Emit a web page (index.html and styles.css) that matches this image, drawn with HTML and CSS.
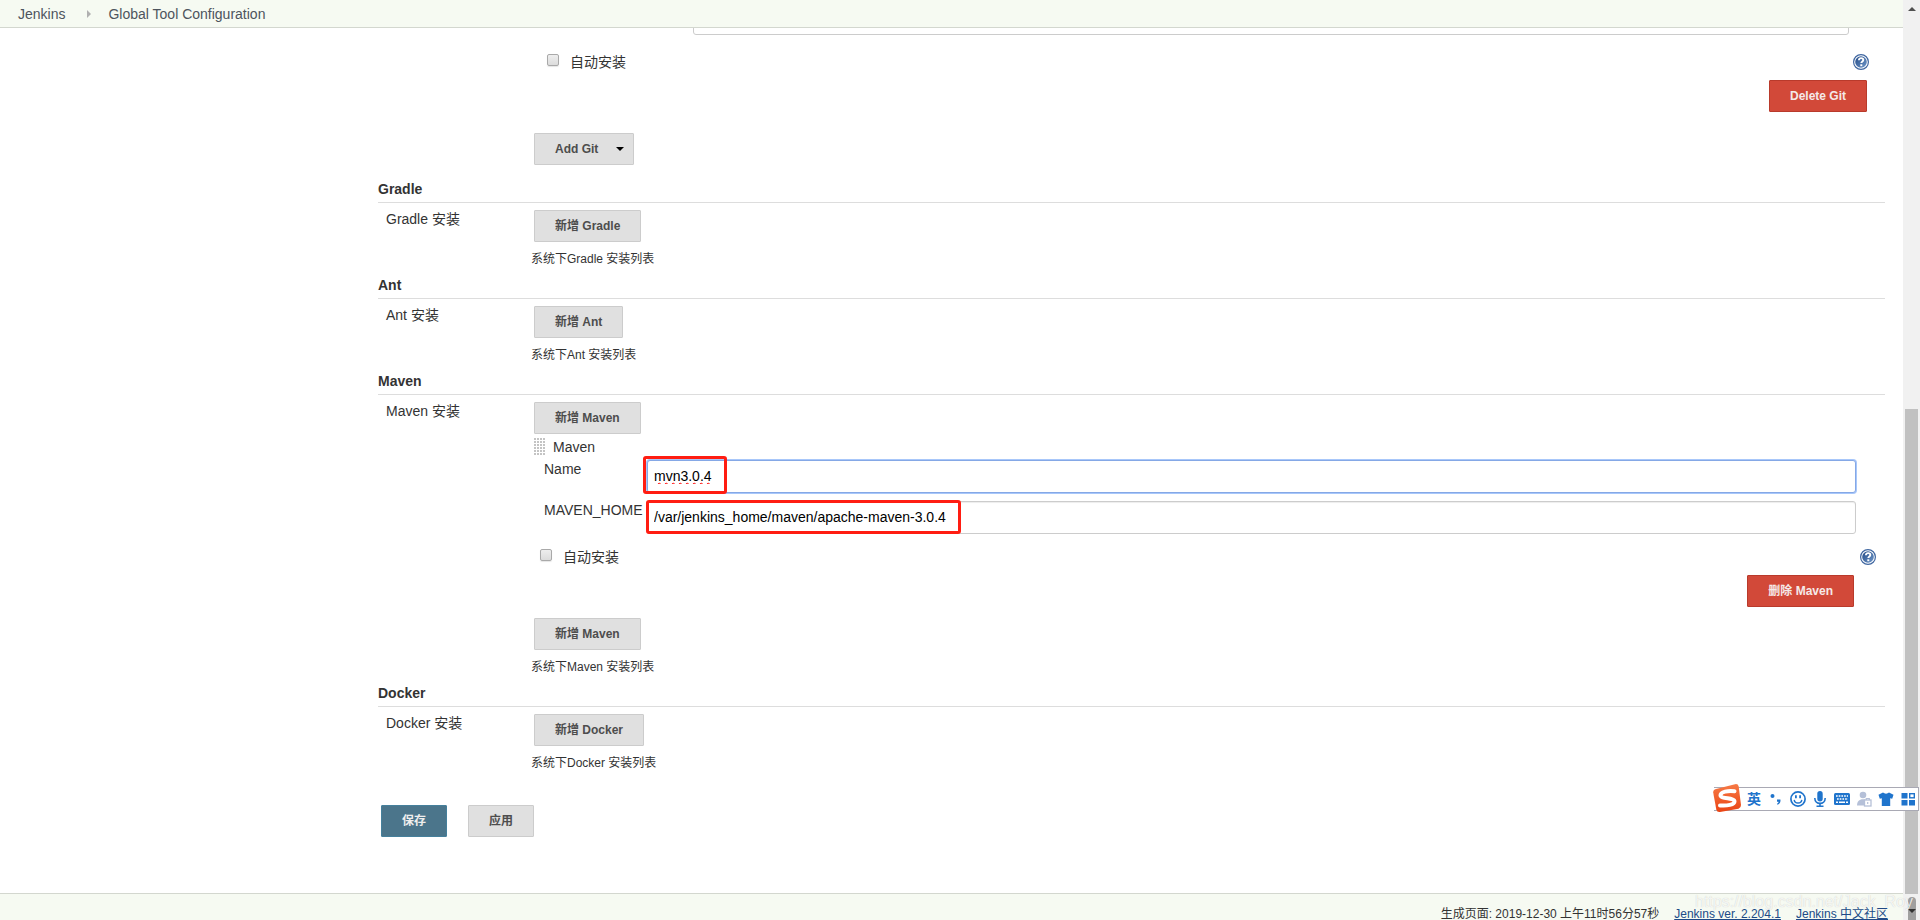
FILE: index.html
```html
<!DOCTYPE html>
<html lang="zh-CN">
<head>
<meta charset="utf-8">
<title>Global Tool Configuration [Jenkins]</title>
<link rel="stylesheet" href="styles.css">
</head>
<body>
<svg class="defs" aria-hidden="true">
  <defs>
    <linearGradient id="help-fill" x1="0" y1="0" x2="1" y2="1">
      <stop offset="0" stop-color="#234a86"/>
      <stop offset="1" stop-color="#6f97c9"/>
    </linearGradient>
    <linearGradient id="logo-fill" x1="0" y1="0" x2="0" y2="1">
      <stop offset="0" stop-color="#f77a45"/>
      <stop offset="1" stop-color="#ea4414"/>
    </linearGradient>
    <symbol id="help" viewBox="0 0 16 16">
      <circle cx="8" cy="8" r="7.4" fill="#fff" stroke="#3f66a0" stroke-width="1.2"/>
      <circle cx="8" cy="8" r="5.8" fill="url(#help-fill)"/>
      <path d="M5.900 6.300C6 4.600 7 4.100 8.100 4.100c1.300 0 2.200.7 2.200 1.900 0 1.500-2 1.500-2 3.100" fill="none" stroke="#fff" stroke-width="1.900"/>
      <rect x="7.300" y="10.300" width="2" height="1.900" fill="#fff"/>
    </symbol>
  </defs>
</svg>
<div class="page">
  <nav class="breadcrumbs">
    <a href="#">Jenkins</a>
    <span class="crumb-arrow"></span>
    <a href="#">Global Tool Configuration</a>
  </nav>

  <main class="config">
    <div class="git">
      <div class="cut-field"><input class="text-input" type="text" aria-label="Path to Git executable"></div>
      <div class="check-row">
        <label><input class="check" type="checkbox">自动安装</label>
        <svg class="help-icon"><use href="#help"/></svg>
      </div>
      <div class="delete-row"><button class="btn danger" type="button">Delete Git</button></div>
      <button class="btn menu-btn" type="button">Add Git<span class="caret"></span></button>
    </div>

    <section>
      <h2>Gradle</h2>
      <div class="row">
        <div class="row-label">Gradle 安装</div>
        <div>
          <button class="btn" type="button">新增 Gradle</button>
          <p class="hint">系统下Gradle 安装列表</p>
        </div>
      </div>
    </section>

    <section>
      <h2>Ant</h2>
      <div class="row">
        <div class="row-label">Ant 安装</div>
        <div>
          <button class="btn" type="button">新增 Ant</button>
          <p class="hint">系统下Ant 安装列表</p>
        </div>
      </div>
    </section>

    <section>
      <h2>Maven</h2>
      <div class="row">
        <div class="row-label">Maven 安装</div>
        <div>
          <button class="btn" type="button">新增 Maven</button>
          <div class="installer">
            <div class="drag-row">
              <svg class="grip" viewBox="0 0 12 18"><path d="M0 1h12M0 4h12M0 7h12M0 10h12M0 13h12M0 16h12" stroke="#c4c4c4" stroke-width="2" stroke-dasharray="2 1"/></svg>
              <span>Maven</span>
            </div>
            <div class="field">
              <label for="maven-name">Name</label>
              <div class="control">
                <input class="text-input active" id="maven-name" type="text" value="mvn3.0.4" spellcheck="false">
                <span class="mark mark-name"></span>
              </div>
            </div>
            <div class="field">
              <label for="maven-home">MAVEN_HOME</label>
              <div class="control">
                <input class="text-input" id="maven-home" type="text" value="/var/jenkins_home/maven/apache-maven-3.0.4" spellcheck="false">
                <span class="mark mark-home"></span>
              </div>
            </div>
            <div class="check-row">
              <label><input class="check" type="checkbox">自动安装</label>
              <svg class="help-icon"><use href="#help"/></svg>
            </div>
            <div class="delete-row"><button class="btn danger" type="button">删除 Maven</button></div>
          </div>
          <button class="btn" type="button">新增 Maven</button>
          <p class="hint">系统下Maven 安装列表</p>
        </div>
      </div>
    </section>

    <section>
      <h2>Docker</h2>
      <div class="row">
        <div class="row-label">Docker 安装</div>
        <div>
          <button class="btn" type="button">新增 Docker</button>
          <p class="hint">系统下Docker 安装列表</p>
        </div>
      </div>
    </section>

    <div class="actions">
      <button class="btn primary" type="submit">保存</button>
      <button class="btn" type="button">应用</button>
    </div>
  </main>

  <footer class="footer">
    <span>生成页面: 2019-12-30 上午11时56分57秒</span>
    <a href="#">Jenkins ver. 2.204.1</a>
    <a href="#">Jenkins 中文社区</a>
  </footer>
</div>

<div class="scrollbar">
  <span class="arrow-up"></span>
  <span class="thumb"></span>
  <span class="corner"><span class="arrow-down"></span></span>
</div>

<div class="watermark">https://blog.csdn.net/Jack_Roy</div>

<div class="ime">
  <svg class="ime-logo" viewBox="0 0 30 30">
    <path d="M4 6 23 1.2Q26 .6 26.7 3.4L29 22Q29 25 26.500 25.800L8 29Q5 29.500 4.300 26.500L1.200 9.500Q1 6.800 4 6Z" fill="url(#logo-fill)"/>
    <path d="M22.500 8.200C16 7.300 8.500 8.800 8.500 12.200c0 4 14 2.200 14 6.200 0 3.300-7.500 4.600-14.500 4" fill="none" stroke="#fff" stroke-width="4" stroke-linecap="round"/>
  </svg>
  <span class="ime-lang">英</span>
  <svg viewBox="0 0 16 16"><circle cx="4.500" cy="5" r="2" fill="#1f74cc"/><path d="M9 8.500h3.400c.4 2.600-.6 4.500-3 5.200l-.4-1c1-.4 1.500-1 1.500-1.900H9z" fill="#1f74cc"/></svg>
  <svg viewBox="0 0 16 16"><circle cx="8" cy="8" r="7.100" fill="none" stroke="#1f74cc" stroke-width="1.700"/><path d="M4.200 8.800c.5 4.200 7.100 4.200 7.600 0" fill="none" stroke="#1f74cc" stroke-width="1.400"/><path d="M5 4.200h1.800v3H5zM9.200 4.200H11v3H9.200z" fill="#1f74cc"/></svg>
  <svg viewBox="0 0 16 16"><rect x="5.300" y="0" width="5.400" height="10.500" rx="2.700" fill="#1f74cc"/><path d="M2.800 7c0 7.200 10.400 7.200 10.400 0M8 12v3M4.500 15.200h7" fill="none" stroke="#1f74cc" stroke-width="1.600"/></svg>
  <svg viewBox="0 0 16 16"><rect x="0" y="2" width="16" height="12" rx="1.500" fill="#1f74cc"/><path d="M2 5h12M3 8h11" stroke="#fff" stroke-width="1.700" stroke-dasharray="1.700 1"/><path d="M2 11.300h2M5 11.300h6M12 11.300h2" stroke="#fff" stroke-width="1.500"/></svg>
  <svg viewBox="0 0 16 16"><circle cx="7" cy="4" r="3.300" fill="#b5c0d8"/><path d="M1 14.500c0-4 2-6.300 6-6.300s6 2.300 6 6.300z" fill="#b5c0d8"/><rect x="8.500" y="9" width="6.500" height="6" fill="#fff" stroke="#b5c0d8" stroke-width="1.300"/><path d="M10.300 9V7.500h3V9M11.700 11v2" fill="none" stroke="#b5c0d8" stroke-width="1.200"/></svg>
  <svg viewBox="0 0 16 16"><path d="M5 1.500c1.500 1.500 4.500 1.500 6 0l4.500 2.200-1.300 4-2-.5V15H3.800V7.200l-2 .5-1.300-4z" fill="#1f74cc"/></svg>
  <svg viewBox="0 0 16 16"><path d="M1.500 2h6v5.500h-6zM1.500 9h6v5.500h-6zM9 9h6v5.500H9z" fill="#1f74cc"/><rect x="9.700" y="2.700" width="4.600" height="4.100" fill="#fff" stroke="#1f74cc" stroke-width="1.400"/></svg>
</div>
</body>
</html>
```
FILE: styles.css
```css
* {
  box-sizing: border-box;
}

body {
  margin: 0;
  display: flex;
  height: 100vh;
  overflow: hidden;
  background: #fff;
  color: #333;
  font: 14px/20px "Liberation Sans", "Noto Sans CJK SC", sans-serif;
}

.defs {
  position: absolute;
  width: 0;
  height: 0;
}

.page {
  flex: 1;
  min-width: 0;
  display: flex;
  flex-direction: column;
}

.breadcrumbs {
  display: flex;
  align-items: center;
  gap: 17px;
  height: 28px;
  padding: 0 18px;
  background: #f6faf2;
  border-bottom: 1px solid #d3d7cf;
}

.breadcrumbs a {
  color: #4d545d;
  text-decoration: none;
}

.crumb-arrow {
  margin-left: 5px;
  border: 4px solid transparent;
  border-left-color: #b0b0b0;
  border-right: 0;
}

.config {
  flex: 1;
  min-height: 0;
  padding: 0 18px 0 378px;
}

.git {
  padding-left: 153px;
  margin-bottom: 14px;
}

.cut-field {
  display: flex;
  align-items: flex-end;
  height: 7px;
  margin: 0 36px 17px 162px;
  overflow: hidden;
}

.text-input {
  display: block;
  width: 100%;
  height: 33px;
  padding: 5px 6px 7px;
  border: 1px solid #ccc;
  border-radius: 3px;
  background: #fff;
  box-shadow: inset 0 1px 1px rgba(0, 0, 0, 0.075);
  color: #000;
  font: inherit;
}

.cut-field .text-input {
  flex: none;
}

.text-input.active {
  border-color: #85a8e6;
  box-shadow: 0 0 0 1px #a8c7fa;
  text-decoration: underline wavy #f00 1px;
  text-decoration-skip-ink: none;
}

.check-row {
  display: flex;
  justify-content: space-between;
  align-items: center;
  height: 20px;
  padding: 0 16px;
}

.check-row label {
  display: flex;
  align-items: center;
  gap: 11px;
}

.check {
  appearance: none;
  width: 12px;
  height: 12px;
  margin: 0 0 4px;
  border: 1px solid #a9a9a9;
  border-radius: 2px;
  background: linear-gradient(#eee, #dcdcdc);
  box-shadow: 0 1px 1px rgba(0, 0, 0, 0.1);
}

.help-icon {
  width: 16px;
  height: 16px;
}

.delete-row {
  display: flex;
  justify-content: flex-end;
  margin: 8px 18px 21px 0;
}

.btn {
  display: block;
  height: 32px;
  margin: 0 0 0 3px;
  padding: 0 20px;
  border: 1px solid #ccc;
  border-radius: 1px;
  background: #e0e0e0;
  color: #4d4d4d;
  font: bold 12px/20px "Liberation Sans", "Noto Sans CJK SC", sans-serif;
}

.btn.danger {
  background: #d24939;
  border-color: #b93a2b;
  color: #f5e9e8;
}

.btn.primary {
  background: #4b758b;
  border-color: #45809c;
  color: #eee;
}

.menu-btn {
  display: flex;
  align-items: center;
  gap: 18px;
  padding-right: 9px;
}

.caret {
  border: 4px solid transparent;
  border-top-color: #000;
  border-bottom: 0;
}

h2 {
  margin: 0;
  padding-bottom: 3px;
  border-bottom: 1px solid #ddd;
  font: bold 14px/20px "Liberation Sans", sans-serif;
}

.row {
  display: grid;
  grid-template-columns: 153px 1fr;
  padding: 7px 0 6px;
}

.row-label {
  padding-left: 8px;
  line-height: 18px;
}

.hint {
  margin: 7px 0 0;
  font-size: 12px;
}

.installer {
  padding-top: 3px;
}

.drag-row {
  display: flex;
  align-items: center;
  gap: 7px;
  margin-bottom: 3px;
  padding-left: 3px;
}

.grip {
  width: 12px;
  height: 18px;
}

.field {
  display: grid;
  grid-template-columns: 103px 1fr;
  margin: 0 29px 8px 13px;
}

.field label {
  line-height: 18px;
}

.control {
  position: relative;
}

.mark {
  position: absolute;
  border: 3px solid #ff1d12;
  border-radius: 3px;
  pointer-events: none;
}

.mark-name {
  left: -4px;
  top: -4px;
  width: 84px;
  height: 38px;
}

.mark-home {
  left: -1px;
  top: -1px;
  width: 315px;
  height: 34px;
}

.installer .check-row {
  margin-top: 13px;
  padding: 0 9px;
}

.installer .delete-row {
  margin: 8px 31px 11px 0;
}

.actions {
  display: flex;
  gap: 18px;
  padding-top: 26px;
}

.footer {
  display: flex;
  justify-content: flex-end;
  gap: 15px;
  height: 27px;
  padding: 10px 15px 0 0;
  overflow: hidden;
  background: #f6faf2;
  border-top: 1px solid #d3d7cf;
  font-size: 12px;
}

.footer a {
  color: #204a87;
}

.scrollbar {
  display: flex;
  flex-direction: column;
  align-items: center;
  width: 17px;
  background: #f1f1f1;
}

.arrow-up {
  margin: 7px 0;
  border: 4px solid transparent;
  border-bottom-color: #505050;
  border-top: 0;
}

.thumb {
  flex: 1;
  width: 13px;
  margin-top: 391px;
  background: #c1c1c1;
}

.corner {
  display: flex;
  justify-content: center;
  width: 8px;
  height: 23px;
  margin-top: 3px;
  padding-top: 12px;
  border-radius: 4px 4px 0 0;
  background: #a0a0a0;
}

.arrow-down {
  flex: none;
  width: 0;
  height: 0;
  border: 4px solid transparent;
  border-top-color: #333;
  border-bottom: 0;
}

.watermark {
  position: absolute;
  right: 7px;
  bottom: 8px;
  color: rgba(255, 255, 255, 0.8);
  font-size: 16px;
  line-height: 20px;
  text-shadow: 0 0 1px rgba(0, 0, 0, 0.2);
}

.ime {
  position: absolute;
  right: 1px;
  bottom: 109px;
  display: flex;
  align-items: center;
  gap: 6px;
  height: 24px;
  padding: 0 2px 0 0;
  border: 1px solid #a9a9b4;
  border-left: 0;
  background: #fff;
}

.ime svg {
  width: 16px;
  height: 16px;
}

.ime .ime-logo {
  width: 30px;
  height: 30px;
  margin: -2px -2px 0 -2px;
}

.ime-lang {
  width: 16px;
  color: #1f74cc;
  font-weight: bold;
  text-align: center;
}
```
